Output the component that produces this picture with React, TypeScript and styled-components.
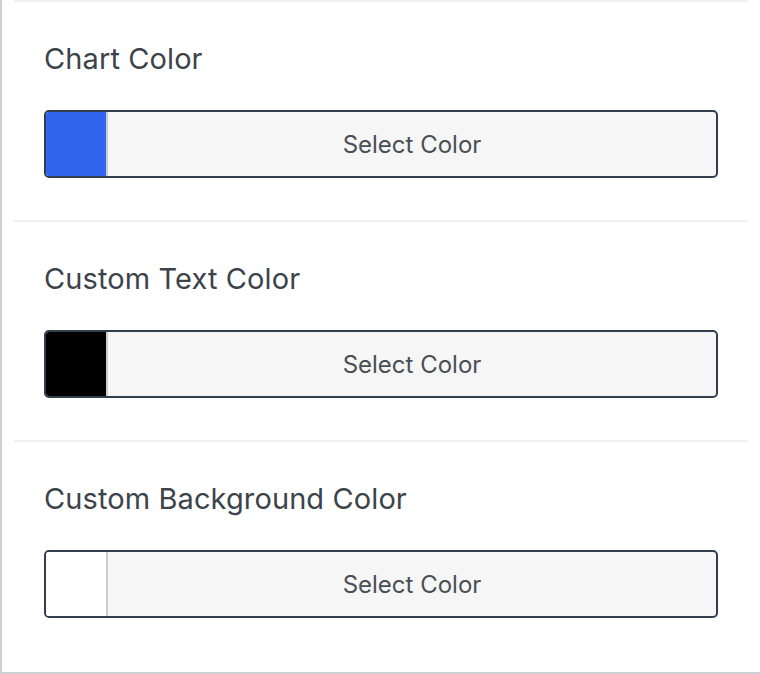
import React from "react";
import styled, { createGlobalStyle } from "styled-components";

const Global = createGlobalStyle`
  html, body { margin: 0; padding: 0; background: #ffffff; }
  body { font-family: Inter, "Liberation Sans", Arial, sans-serif; }
  * { box-sizing: border-box; }
`;

const Panel = styled.div`
  width: 760px;
  height: 674px;
  border-left: 2px solid #ccd0d4;
  border-bottom: 2px solid #ccd0d4;
  padding: 0 12px 12px 12px;
  background: #ffffff;
  display: flex;
  flex-direction: column;
`;

const Section = styled.section`
  border-top: 2px solid #f0f0f0;
  padding: 40px 30px 42px 30px;
  display: flex;
  flex-direction: column;
`;

const Title = styled.h2`
  margin: 0 0 34px 0;
  font-size: 29px;
  line-height: 34px;
  font-weight: 400;
  color: #3c434a;
  letter-spacing: 0.1px;
`;

const PickerButton = styled.button`
  display: flex;
  align-items: stretch;
  width: 100%;
  height: 68px;
  padding: 0;
  border: 2px solid #333e4f;
  border-radius: 5px;
  background: #f6f6f6;
  overflow: hidden;
  cursor: pointer;
  font-family: inherit;
`;

const Swatch = styled.span<{ $color: string }>`
  flex: 0 0 62px;
  background: ${(p) => p.$color};
  border-right: 2px solid #cccccc;
`;

const Label = styled.span`
  flex: 1;
  display: flex;
  align-items: center;
  justify-content: center;
  font-size: 24px;
  padding-top: 1px;
  color: #4a4f55;
`;

const items = [
  { title: "Chart Color", color: "#3264ed" },
  { title: "Custom Text Color", color: "#000000" },
  { title: "Custom Background Color", color: "#ffffff" },
];

export default function App() {
  return (
    <>
      <Global />
      <Panel>
        {items.map((it) => (
          <Section key={it.title}>
            <Title>{it.title}</Title>
            <PickerButton type="button">
              <Swatch $color={it.color} />
              <Label>Select Color</Label>
            </PickerButton>
          </Section>
        ))}
      </Panel>
    </>
  );
}
